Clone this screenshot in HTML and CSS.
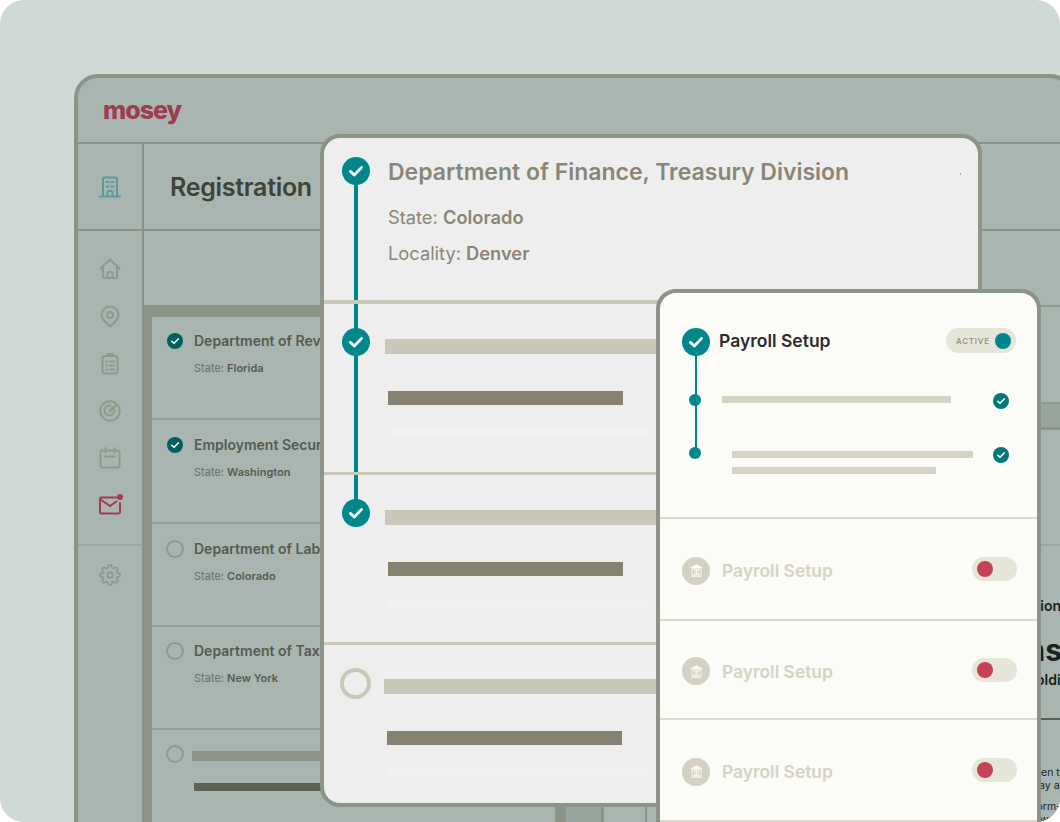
FILE: index.html
```html
<!DOCTYPE html>
<html lang="en">
<head>
    <meta charset="UTF-8">
    <meta name="viewport" content="width=device-width, initial-scale=1.0">
    <title>Mosey Registration</title>
    <link rel="stylesheet" href="styles.css">
</head>
<body>
    <svg class="sprites" aria-hidden="true">
        <symbol id="check" viewBox="0 0 28 28">
            <circle cx="14" cy="14" r="14" fill="currentColor"/>
            <path d="M8.4 14.4l3.9 3.6 7.3-7.6" fill="none" stroke="#fff" stroke-width="2.8" stroke-linecap="round" stroke-linejoin="round"/>
        </symbol>
        <symbol id="bank" viewBox="0 0 18 18">
            <path d="M9 1.5L16 5.5V6.5H2V5.5z M3 15h12v1.5H3z" fill="#fbfbf7"/>
            <path d="M3.5 8h11v6h-11z M7 8v6 M9 8v6 M11 8v6" fill="none" stroke="#fbfbf7" stroke-width="1"/>
        </symbol>
    </svg>

    <div class="stage">
        <div class="app">
            <div class="app-header">
                <span class="logo">mosey</span>
            </div>
            <div class="app-body">
                <div class="sidebar">
                    <div class="side-top">
                        <svg class="icon icon-teal" viewBox="0 0 22 22">
                            <path d="M1 20.5h20 M4 20.5V3a1.5 1.5 0 0 1 1.5-1.5h11A1.5 1.5 0 0 1 18 3v17.5 M8.5 20.5v-4.5a1 1 0 0 1 1-1h3a1 1 0 0 1 1 1v4.5 M7.5 6h2 M12.5 6h2 M7.5 10.5h2 M12.5 10.5h2"/>
                        </svg>
                    </div>
                    <div class="side-nav">
                        <svg class="icon" viewBox="0 0 22 22">
                            <path d="M1.5 10.5L11 1.5l9.5 9 M4 8.500V18.500a1.500 1.500 0 0 0 1.500 1.500h11a1.500 1.500 0 0 0 1.500-1.500V8.500 M8.500 20v-5a1 1 0 0 1 1-1h3a1 1 0 0 1 1 1v5"/>
                        </svg>
                        <svg class="icon" viewBox="0 -1 22 22">
                            <path d="M11 20.500C5.500 15.500 2.500 12.700 2.500 9a8.500 8.500 0 0 1 17 0c0 3.700-3 6.500-8.500 11.500z"/>
                            <circle cx="11" cy="9" r="3"/>
                        </svg>
                        <svg class="icon" viewBox="0 -2 22 22">
                            <rect x="3.500" y="2" width="15" height="17.500" rx="2.500"/>
                            <path d="M8 2V1a1 1 0 0 1 1-1h4a1 1 0 0 1 1 1v1z M7.500 7.500h.5 M11 7.500h4 M7.500 11.500h.5 M11 11.500h4 M7.500 15.500h.5 M11 15.500h4"/>
                        </svg>
                        <svg class="icon" viewBox="0 0 22 22">
                            <circle cx="11" cy="11" r="9.700"/>
                            <path d="M15.500 9.500a5 5 0 1 1-4-4"/>
                            <path d="M11 11l5-5" stroke-width="3"/>
                        </svg>
                        <svg class="icon" viewBox="0 0 22 22">
                            <rect x="1.500" y="3.500" width="19" height="17" rx="1.500"/>
                            <path d="M6.500 1v4.500 M15.500 1v4.500 M6 9.500h10"/>
                        </svg>
                        <span class="mail">
                            <svg class="icon icon-red" viewBox="0 0 22 22">
                                <path d="M17 3.500H2.500a1.500 1.500 0 0 0-1.500 1.500v13a1.500 1.500 0 0 0 1.500 1.500h17a1.500 1.500 0 0 0 1.500-1.500V9 M1.500 5.500L11 12l6.500-4.500"/>
                            </svg>
                            <span class="mail-dot"></span>
                        </span>
                    </div>
                    <div class="side-bottom">
                        <svg class="icon" viewBox="0 0 24 24">
                            <circle cx="12" cy="12" r="3"/>
                            <path d="M19.400 15a1.650 1.650 0 0 0 .33 1.820l.06.06a2 2 0 0 1 0 2.830 2 2 0 0 1-2.830 0l-.06-.06a1.650 1.650 0 0 0-1.820-.33 1.650 1.650 0 0 0-1 1.510V21a2 2 0 0 1-2 2 2 2 0 0 1-2-2v-.09A1.650 1.650 0 0 0 9 19.400a1.650 1.650 0 0 0-1.820.33l-.06.06a2 2 0 0 1-2.830 0 2 2 0 0 1 0-2.830l.06-.06a1.650 1.650 0 0 0 .33-1.820 1.650 1.650 0 0 0-1.510-1H3a2 2 0 0 1-2-2 2 2 0 0 1 2-2h.09A1.650 1.650 0 0 0 4.600 9a1.650 1.650 0 0 0-.33-1.820l-.06-.06a2 2 0 0 1 0-2.830 2 2 0 0 1 2.830 0l.06.06a1.650 1.650 0 0 0 1.820.33H9a1.650 1.650 0 0 0 1-1.510V3a2 2 0 0 1 2-2 2 2 0 0 1 2 2v.09a1.650 1.650 0 0 0 1 1.510 1.650 1.650 0 0 0 1.820-.33l.06-.06a2 2 0 0 1 2.830 0 2 2 0 0 1 0 2.830l-.06.06a1.650 1.650 0 0 0-.33 1.820V9a1.650 1.650 0 0 0 1.510 1H21a2 2 0 0 1 2 2 2 2 0 0 1-2 2h-.09a1.650 1.650 0 0 0-1.510 1z"/>
                        </svg>
                    </div>
                </div>

                <div class="main">
                    <div class="title-row">
                        <h1>Registration</h1>
                    </div>
                    <div class="sub-row"></div>
                    <div class="content">
                        <div class="list">
                            <div class="list-row">
                                <svg class="list-check"><use href="#check"/></svg>
                                <div>
                                    <h3>Department of Revenue</h3>
                                    <p>State: <b>Florida</b></p>
                                </div>
                            </div>
                            <div class="list-row list-row-low">
                                <svg class="list-check"><use href="#check"/></svg>
                                <div>
                                    <h3>Employment Security</h3>
                                    <p>State: <b>Washington</b></p>
                                </div>
                            </div>
                            <div class="list-row list-row-low">
                                <span class="list-ring"></span>
                                <div>
                                    <h3>Department of Labor</h3>
                                    <p>State: <b>Colorado</b></p>
                                </div>
                            </div>
                            <div class="list-row">
                                <span class="list-ring"></span>
                                <div>
                                    <h3>Department of Taxation</h3>
                                    <p>State: <b>New York</b></p>
                                </div>
                            </div>
                            <div class="list-row list-row-last">
                                <span class="list-ring"></span>
                                <div>
                                    <div class="list-bar"></div>
                                    <div class="list-bar-dark"></div>
                                </div>
                            </div>
                        </div>
                        <div class="detail">
                            <div class="col-a"></div>
                            <div class="col-b"></div>
                            <div class="col-c">
                                <div class="band"></div>
                                <div class="panel-mid"></div>
                                <div class="copy">
                                    <div class="copy-label">Registration</div>
                                    <div class="copy-big">Returns</div>
                                    <div class="copy-sub">Withholding</div>
                                    <div class="copy-rule"></div>
                                    <div class="copy-small">
                                        <div class="over-a">Learn when to</div>
                                        <div class="over-b">and pay any</div>
                                    </div>
                                    <div class="copy-small copy-small-two">
                                        <div class="over-c">the form-</div>
                                        <div class="over-d">if we</div>
                                    </div>
                                </div>
                            </div>
                        </div>
                    </div>
                </div>
            </div>
        </div>

        <div class="card card-main">
            <span class="track"></span>
            <div class="step step-head">
                <svg class="step-check"><use href="#check"/></svg>
                <div>
                    <h2>Department of Finance, Treasury Division</h2>
                    <p>State: <b>Colorado</b></p>
                    <p>Locality: <b>Denver</b></p>
                </div>
                <span class="speck"></span>
            </div>
            <div class="step step-two">
                <svg class="step-check"><use href="#check"/></svg>
                <div class="bars">
                    <div class="bar-wide"></div>
                    <div class="bar-dark"></div>
                    <div class="bar-faint"></div>
                </div>
            </div>
            <div class="step step-three">
                <svg class="step-check"><use href="#check"/></svg>
                <div class="bars">
                    <div class="bar-wide"></div>
                    <div class="bar-dark"></div>
                    <div class="bar-faint"></div>
                </div>
            </div>
            <div class="step step-four">
                <span class="step-ring"></span>
                <div class="bars">
                    <div class="bar-wide"></div>
                    <div class="bar-dark"></div>
                    <div class="bar-faint"></div>
                </div>
            </div>
        </div>

        <div class="card card-payroll">
            <span class="pay-track"></span>
            <div class="pay-head">
                <div class="pay-top">
                    <svg class="step-check"><use href="#check"/></svg>
                    <h4>Payroll Setup</h4>
                    <div class="pill">
                        <span>ACTIVE</span>
                        <i></i>
                    </div>
                </div>
                <div class="pay-item pay-item-one">
                    <span class="pay-dot"></span>
                    <div class="pay-lines">
                        <div class="pay-line pay-line-a"></div>
                    </div>
                    <svg class="pay-check"><use href="#check"/></svg>
                </div>
                <div class="pay-item pay-item-two">
                    <span class="pay-dot"></span>
                    <div class="pay-lines pay-lines-inset">
                        <div class="pay-line pay-line-b"></div>
                        <div class="pay-line pay-line-c"></div>
                    </div>
                    <svg class="pay-check"><use href="#check"/></svg>
                </div>
            </div>
            <div class="pay-row pay-row-tall">
                <div class="pay-name">
                    <span class="bank"><svg><use href="#bank"/></svg></span>
                    <span>Payroll Setup</span>
                </div>
                <div class="toggle"><i></i></div>
            </div>
            <div class="pay-row">
                <div class="pay-name">
                    <span class="bank"><svg><use href="#bank"/></svg></span>
                    <span>Payroll Setup</span>
                </div>
                <div class="toggle"><i></i></div>
            </div>
            <div class="pay-row pay-row-tall">
                <div class="pay-name">
                    <span class="bank"><svg><use href="#bank"/></svg></span>
                    <span>Payroll Setup</span>
                </div>
                <div class="toggle"><i></i></div>
            </div>
        </div>
    </div>
</body>
</html>
```

FILE: styles.css
```css
* {
    box-sizing: border-box;
}

body {
    margin: 0;
    background: #fff;
    font-family: Inter, "Liberation Sans", sans-serif;
}

h1, h2, h3, h4, p {
    margin: 0;
}

.sprites {
    display: none;
}

.stage {
    position: relative;
    width: 1060px;
    height: 822px;
    padding: 74px 0 0 74px;
    overflow: hidden;
    border-radius: 24px;
    background: #cfd9d5;
}

/* background window */
.app {
    display: flex;
    flex-direction: column;
    width: 1000px;
    height: 790px;
    border: 4px solid #8b9486;
    border-radius: 24px;
    background: #a8b5b0;
}

.app-header {
    display: flex;
    align-items: center;
    height: 66px;
    padding-left: 25px;
    border-bottom: 2px solid #8b9486;
}

.logo {
    color: #9d3d50;
    font-size: 25px;
    font-weight: 800;
    letter-spacing: -1px;
    line-height: 1;
}

.app-body {
    display: flex;
    flex: 1;
}

.sidebar {
    flex: 0 0 66px;
    border-right: 2px solid #8b9486;
}

.side-top {
    display: flex;
    justify-content: center;
    align-items: center;
    height: 87px;
    border-bottom: 2px solid #8b9486;
}

.side-nav {
    display: flex;
    flex-direction: column;
    align-items: center;
    gap: 25.2px;
    padding: 27px 0 28px;
    border-bottom: 2px solid #9aa79f;
}

.side-bottom {
    display: flex;
    justify-content: center;
    padding-top: 18px;
}

.icon {
    display: block;
    width: 22px;
    height: 22px;
    overflow: visible;
    fill: none;
    stroke: #8f9a8c;
    stroke-width: 2;
    stroke-linecap: round;
    stroke-linejoin: round;
}

.icon-teal {
    stroke: #5f9a9a;
}

.icon-red {
    stroke: #a8394f;
}

.mail {
    position: relative;
    display: block;
    width: 22px;
    height: 22px;
}

.mail-dot {
    position: absolute;
    top: 0;
    right: -2px;
    width: 6px;
    height: 6px;
    border-radius: 50%;
    background: #a8394f;
}

.main {
    display: flex;
    flex-direction: column;
    flex: 1;
}

.title-row {
    display: flex;
    align-items: center;
    height: 87px;
    padding-left: 26px;
    border-bottom: 2px solid #8b9486;
}

h1 {
    color: #3e4438;
    font-size: 25px;
    font-weight: 600;
    letter-spacing: -0.3px;
}

.sub-row {
    height: 74px;
}

.content {
    display: flex;
    flex: 1;
}

.list {
    flex: 0 0 411px;
    border-top: 12px solid #8b9486;
    border-left: 8px solid #8b9486;
}

.list-row {
    display: flex;
    gap: 10px;
    height: 103.25px;
    padding: 14px 0 0 14px;
    border-bottom: 2px solid #939e90;
}

.list-row-low {
    padding-top: 15px;
}

.list-row:first-child {
    border-top-left-radius: 6px;
}

.list-row-last {
    border-bottom: 0;
}

.list-check {
    flex: none;
    width: 18px;
    height: 18px;
    margin-top: 1px;
    padding: 1px;
    color: #005f5f;
}

.list-ring {
    flex: none;
    width: 18px;
    height: 18px;
    margin-top: 1px;
    border: 2px solid #8f9a8c;
    border-radius: 50%;
}

.list h3 {
    color: #565c50;
    font-size: 14px;
    font-weight: 600;
    line-height: 20px;
    white-space: nowrap;
}

.list p {
    margin-top: 10px;
    color: #6a7268;
    font-size: 11px;
    line-height: 14px;
}

.list b {
    color: #565c50;
    font-weight: 600;
}

.list-bar {
    width: 200px;
    height: 10px;
    margin: 7px 0 0 -2px;
    background: #8b9486;
}

.list-bar-dark {
    width: 200px;
    height: 8px;
    margin-top: 22px;
    background: #5d6353;
}

.detail {
    display: flex;
    flex: 1;
    border-left: 11px solid #8b9486;
}

.col-a {
    flex: 0 0 38px;
    border-right: 3px solid #8b9486;
    background: #98a59c;
}

.col-b {
    flex: 0 0 43px;
    border-right: 2px solid #8b9486;
}

.col-c {
    flex: 1;
    border-top: 2px solid #8f9a8c;
}

.band {
    height: 28px;
    margin-top: 95px;
    border-top: 2px solid #8f9a8c;
    border-bottom: 3px solid #8b9486;
    background: #98a59c;
}

.panel-mid {
    height: 114px;
}

/* the text that shows past the edge of the payroll card */
.copy {
    text-align: right;
    white-space: nowrap;
    color: #1d1f1c;
    border-top: 2px solid #9aa79f;
}

.copy-label {
    height: 18px;
    margin: 51px 9px 0 0;
    font-size: 14px;
    font-weight: 600;
    line-height: 18px;
}

.copy-big {
    height: 36px;
    margin: 17px 8px 0 0;
    font-size: 30px;
    font-weight: 700;
    line-height: 36px;
}

.copy-sub {
    height: 18px;
    margin: 3px -8px 0 0;
    font-size: 14px;
    font-weight: 600;
    line-height: 18px;
}

.copy-rule {
    height: 2px;
    margin-top: 29px;
    background: #5a5f55;
}

.copy-small {
    margin-top: 46px;
    font-size: 10.5px;
    line-height: 13px;
}

.copy-small-two {
    margin-top: 8px;
}

.over-a {
    margin-right: 4px;
}

.over-b {
    margin-right: -1.5px;
}

.over-c {
    margin-right: 9px;
}

.over-d {
    margin-right: 15.5px;
}

/* cards lying over the window */
.card {
    position: absolute;
    border: 4px solid #8b9486;
    border-radius: 20px;
}

.card-main {
    top: 134px;
    left: 320px;
    width: 662px;
    height: 673px;
    background: #eeeeee;
}

.track {
    position: absolute;
    top: 33px;
    left: 30px;
    width: 4px;
    height: 342px;
    background: #00878b;
}

.step {
    position: relative;
    display: flex;
    padding-left: 18px;
    border-bottom: 3px solid #c9c7b8;
}

.step-check {
    position: relative;
    flex: none;
    width: 28px;
    height: 28px;
    color: #00878b;
}

.step-head {
    gap: 18px;
    height: 166px;
    padding-top: 19px;
    border-bottom-width: 4px;
    color: #8a8676;
}

.step-head h2 {
    font-size: 23px;
    font-weight: 600;
    line-height: 30px;
    white-space: nowrap;
}

.step-head p {
    margin-top: 12px;
    font-size: 18.3px;
    line-height: 24px;
}

.step-head h2 + p {
    margin-top: 18px;
}

.step-head b {
    font-weight: 600;
}

.speck {
    position: absolute;
    top: 35px;
    left: 636px;
    width: 1px;
    height: 2px;
    background: #a5a295;
}

.step-two {
    height: 171px;
    padding-top: 24px;
}

.step-three {
    height: 170px;
    padding-top: 24px;
}

.step-four {
    padding-top: 23px;
    border-bottom: 0;
}

.step-ring {
    flex: none;
    width: 31px;
    height: 31px;
    margin: 0 -2px 0 -2px;
    border: 4px solid #c9c7b8;
    border-radius: 50%;
}

.bars {
    margin: 11px 0 0 15px;
}

.bar-wide {
    width: 400px;
    height: 15px;
    background: #c9c7b8;
}

.bar-dark {
    width: 235px;
    height: 14px;
    margin: 37px 0 0 3px;
    background: #868272;
}

.bar-faint {
    width: 260px;
    height: 10px;
    margin: 22px 0 0 3px;
    background: #f0f0f0;
}

.card-payroll {
    top: 289px;
    left: 656px;
    width: 385px;
    height: 600px;
    background: #fbfbf7;
}

.pay-track {
    position: absolute;
    top: 49px;
    left: 35px;
    width: 2px;
    height: 111px;
    background: #00878b;
}

.pay-head {
    height: 226px;
    padding-top: 35px;
    border-bottom: 2px solid #dcd9cc;
}

.pay-top {
    display: flex;
    align-items: center;
    padding: 0 21px 0 22px;
}

.pay-top h4 {
    flex: 1;
    margin: -3px 0 0 9px;
    color: #2c2c30;
    font-size: 17.5px;
    font-weight: 600;
}

.pill {
    display: flex;
    align-self: flex-start;
    justify-content: space-between;
    align-items: center;
    width: 70px;
    height: 25px;
    padding: 0 5px 0 10px;
    border-radius: 13px;
    background: #e6e5da;
}

.pill span {
    color: #8a8878;
    font-size: 8px;
    font-weight: 500;
    letter-spacing: 0.8px;
}

.pill i {
    width: 16px;
    height: 16px;
    border-radius: 50%;
    background: #00878b;
}

.pay-item {
    display: flex;
    align-items: flex-start;
    padding: 0 28px 0 29px;
}

.pay-item-one {
    margin-top: 37px;
}

.pay-item-two {
    margin-top: 38px;
}

.pay-dot {
    position: relative;
    flex: none;
    width: 12px;
    height: 12px;
    margin-top: 1px;
    border-radius: 50%;
    background: #00878b;
}

.pay-item-two .pay-dot {
    margin-top: 0;
}

.pay-lines {
    flex: 1;
    margin: 3px 0 0 21px;
}

.pay-lines-inset {
    margin: 4px 0 0 31px;
}

.pay-line {
    height: 7px;
    background: #d6d3c5;
}

.pay-line-a {
    width: 229px;
}

.pay-line-b {
    width: 241px;
}

.pay-line-c {
    width: 204px;
    margin-top: 9px;
}

.pay-check {
    flex: none;
    width: 16px;
    height: 16px;
    color: #00787c;
}

.pay-row {
    display: flex;
    justify-content: space-between;
    align-items: center;
    height: 99px;
    padding: 0 20px 0 22px;
    border-bottom: 2px solid #dcd9cc;
}

.pay-row-tall {
    height: 102px;
}

.pay-name {
    display: flex;
    align-items: center;
    gap: 12px;
    margin-top: 3px;
    color: #d6d3c5;
    font-size: 17.4px;
    font-weight: 600;
}

.bank {
    display: flex;
    justify-content: center;
    align-items: center;
    width: 28px;
    height: 28px;
    border-radius: 50%;
    background: #d4d1c4;
}

.bank svg {
    width: 15px;
    height: 15px;
}

.toggle {
    display: flex;
    align-items: center;
    width: 45px;
    height: 24px;
    padding-left: 5px;
    border-radius: 12px;
    background: #e6e5da;
}

.toggle i {
    width: 16px;
    height: 16px;
    border-radius: 50%;
    background: #c44356;
}
```
